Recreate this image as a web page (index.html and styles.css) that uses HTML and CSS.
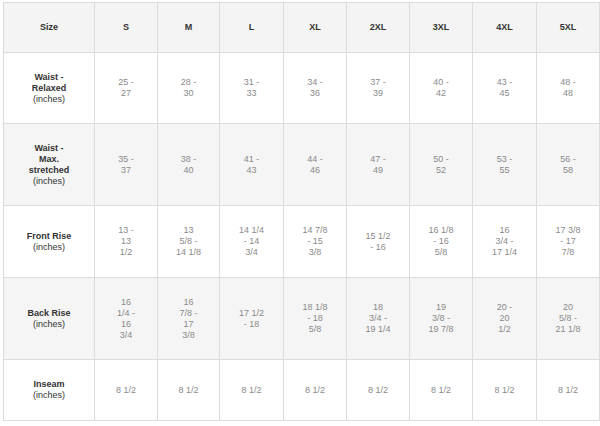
FILE: index.html
```html
<!DOCTYPE html>
<html>
<head>
<meta charset="utf-8">
<link rel="stylesheet" href="styles.css">
</head>
<body>
<table class="chart">
  <colgroup>
    <col class="c-label">
    <col class="c63"><col class="c62"><col class="c64"><col class="c63"><col class="c63"><col class="c63"><col class="c64"><col class="c63">
  </colgroup>
  <tr class="r-head">
    <th>Size</th><th>S</th><th>M</th><th>L</th><th>XL</th><th>2XL</th><th>3XL</th><th>4XL</th><th>5XL</th>
  </tr>
  <tr class="r1">
    <td class="label"><b>Waist -<br>Relaxed</b><br>(inches)</td>
    <td>25 -<br>27</td><td>28 -<br>30</td><td>31 -<br>33</td><td>34 -<br>36</td><td>37 -<br>39</td><td>40 -<br>42</td><td>43 -<br>45</td><td>48 -<br>48</td>
  </tr>
  <tr class="r2 alt">
    <td class="label"><b>Waist -<br>Max.<br>stretched</b><br>(inches)</td>
    <td>35 -<br>37</td><td>38 -<br>40</td><td>41 -<br>43</td><td>44 -<br>46</td><td>47 -<br>49</td><td>50 -<br>52</td><td>53 -<br>55</td><td>56 -<br>58</td>
  </tr>
  <tr class="r3">
    <td class="label"><b>Front Rise</b><br>(inches)</td>
    <td>13 -<br>13<br>1/2</td><td>13<br>5/8 -<br>14 1/8</td><td>14 1/4<br>- 14<br>3/4</td><td>14 7/8<br>- 15<br>3/8</td><td>15 1/2<br>- 16</td><td>16 1/8<br>- 16<br>5/8</td><td>16<br>3/4 -<br>17 1/4</td><td>17 3/8<br>- 17<br>7/8</td>
  </tr>
  <tr class="r4 alt">
    <td class="label"><b>Back Rise</b><br>(inches)</td>
    <td>16<br>1/4 -<br>16<br>3/4</td><td>16<br>7/8 -<br>17<br>3/8</td><td>17 1/2<br>- 18</td><td>18 1/8<br>- 18<br>5/8</td><td>18<br>3/4 -<br>19 1/4</td><td>19<br>3/8 -<br>19 7/8</td><td>20 -<br>20<br>1/2</td><td>20<br>5/8 -<br>21 1/8</td>
  </tr>
  <tr class="r5">
    <td class="label"><b>Inseam</b><br>(inches)</td>
    <td>8 1/2</td><td>8 1/2</td><td>8 1/2</td><td>8 1/2</td><td>8 1/2</td><td>8 1/2</td><td>8 1/2</td><td>8 1/2</td>
  </tr>
</table>
</body>
</html>
```
FILE: styles.css
```css
html, body {
  margin: 0;
  padding: 0;
  background: #ffffff;
}
body {
  padding: 2px 0 0 3px;
  font-family: "Liberation Sans", Arial, sans-serif;
}
.chart {
  border-collapse: collapse;
  table-layout: fixed;
  width: 597px;
  font-size: 9px;
  line-height: 11px;
}
.c-label { width: 91px; }
.c62 { width: 62px; }
.c63 { width: 63px; }
.c64 { width: 64px; }
.chart th,
.chart td {
  border: 1px solid #dcdcdc;
  padding: 0 4px;
  text-align: center;
  vertical-align: middle;
}
.chart th {
  background: #f4f4f4;
  color: #333333;
  font-weight: bold;
}
.chart td {
  color: #8a8a8a;
}
.chart td.label {
  color: #333333;
}
.chart .alt td {
  background: #f5f5f5;
}
.r-head { height: 50px; }
.r1 { height: 71px; }
.r2 { height: 82px; }
.r3 { height: 72px; }
.r4 { height: 82px; }
.r5 { height: 61px; }
```
